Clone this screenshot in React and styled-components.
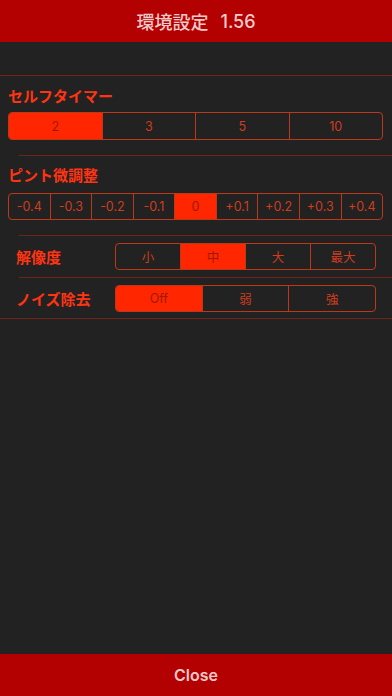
import React from "react";
import styled, { createGlobalStyle } from "styled-components";

const Global = createGlobalStyle`
  html, body { margin: 0; padding: 0; background: #222222; }
  body { font-family: "Inter", "Noto Sans CJK JP", sans-serif; }
  * { box-sizing: border-box; }
`;

const Page = styled.div`
  display: flex;
  flex-direction: column;
  height: 696px;
  width: 392px;
  background: #222222;
`;

const Bar = styled.div`
  flex: 0 0 42px;
  background: #b30000;
  color: #f3c9c9;
  display: flex;
  align-items: center;
  justify-content: center;
  font-family: "Inter", "Noto Sans CJK JP", sans-serif;
  font-weight: ${(p) => (p.$bold ? 600 : 500)};
  font-size: ${(p) => p.$size}px;
`;

const Version = styled.span`
  margin-left: 12px;
`;

const Content = styled.div`
  flex: 1;
  padding-top: 33px;
  display: flex;
  flex-direction: column;
`;

const Divider = styled.div`
  height: 1px;
  flex: none;
  background: #6e2418;
  margin-left: ${(p) => p.$indent || 0}px;
`;

const Section = styled.div`
  display: flex;
  flex-direction: column;
  padding: ${(p) => p.$pt}px 9px 15px 8px;
  gap: ${(p) => p.$gap}px;
`;

const Label = styled.div`
  font-family: "Noto Sans CJK JP", sans-serif;
  font-weight: 700;
  font-size: 15px;
  line-height: 20px;
  color: #ff3413;
  width: ${(p) => p.$w || "auto"};
  flex: none;
`;

const Row = styled.div`
  display: flex;
  align-items: center;
  padding: ${(p) => p.$pad};
  padding-left: 16px;
  padding-right: 16px;
`;

const Seg = styled.div`
  display: flex;
  height: ${(p) => p.$h}px;
  border: 1px solid #bb3819;
  border-radius: 4px;
  overflow: hidden;
  flex: ${(p) => (p.$grow ? 1 : "none")};
`;

const SegItem = styled.div`
  flex: 1;
  display: flex;
  align-items: center;
  justify-content: center;
  font-family: "Inter", "Noto Sans CJK JP", sans-serif;
  font-size: 12.5px;
  color: ${(p) => (p.$on ? "#a01a00" : "#d03c1d")};
  background: ${(p) => (p.$on ? "#ff2600" : "transparent")};
  & + & {
    border-left: 1px solid #bb3819;
  }
`;

function Segmented({ items, selected, h, grow }) {
  return (
    <Seg $h={h} $grow={grow}>
      {items.map((t, i) => (
        <SegItem key={t} $on={i === selected}>
          {t}
        </SegItem>
      ))}
    </Seg>
  );
}

export default function App() {
  return (
    <>
      <Global />
      <Page>
        <Bar $size={18}>
          環境設定<Version>1.56</Version>
        </Bar>
        <Content>
          <Divider />
          <Section $pt={10} $gap={6}>
            <Label>セルフタイマー</Label>
            <Segmented items={["2", "3", "5", "10"]} selected={0} h={28} />
          </Section>
          <Divider $indent={19} />
          <Section $pt={9} $gap={8}>
            <Label>ピント微調整</Label>
            <Segmented
              items={["-0.4", "-0.3", "-0.2", "-0.1", "0", "+0.1", "+0.2", "+0.3", "+0.4"]}
              selected={4}
              h={27}
            />
          </Section>
          <Divider $indent={19} />
          <Row $pad="7px 0">
            <Label $w="99px">解像度</Label>
            <Segmented items={["小", "中", "大", "最大"]} selected={1} h={27} grow />
          </Row>
          <Divider $indent={19} />
          <Row $pad="7px 0 6px">
            <Label $w="99px">ノイズ除去</Label>
            <Segmented items={["Off", "弱", "強"]} selected={0} h={27} grow />
          </Row>
          <Divider />
        </Content>
        <Bar $size={16} $bold>Close</Bar>
      </Page>
    </>
  );
}
